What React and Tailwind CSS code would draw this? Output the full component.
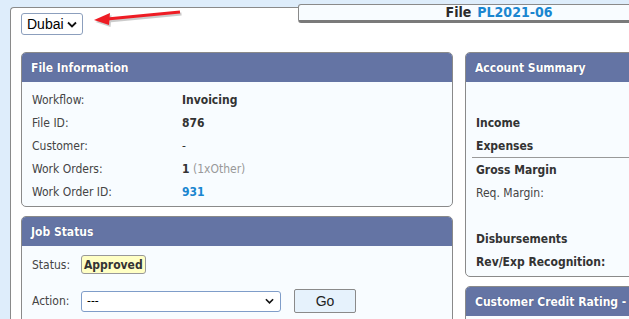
import React from 'react'

const font = "font-['DejaVu_Sans_Condensed','DejaVu_Sans',sans-serif]"

const Chevron = ({ className }) => (
  <svg viewBox="0 0 10 6" className={className} fill="none" stroke="#111" strokeWidth="1.8">
    <path d="M1 1 L5 5 L9 1" />
  </svg>
)

const Panel = ({ title, className = '', children }) => (
  <div className={`border border-[#8a8a8a] rounded-[5px] overflow-hidden bg-[#f8fcff] ${className}`}>
    <div className="h-[29px] bg-[#6474a4] flex items-center pl-[9px] text-white font-bold text-[12px] [text-shadow:0_0_1px_#3a4670]">
      {title}
    </div>
    {children}
  </div>
)

const Row = ({ label, children }) => (
  <div className="flex items-center h-[23px]">
    <div className="w-[150px] text-[#444]">{label}</div>
    <div className="text-[#333]">{children}</div>
  </div>
)

const App = () => {
  return (
    <div className={`w-full h-[319px] overflow-hidden bg-[#deedfb] pt-[7px] pl-[10px] ${font} text-[12px]`}>
      <div className="relative h-[330px] bg-white border-l border-t border-[#8a8a8a] rounded-tl-[4px] pl-[10px] pt-[5px]">

        {/* title tab */}
        <div className="absolute top-[-4px] left-[287px] w-[360px] h-[19px] bg-[#f8fcff] border border-[#8a8a8a] border-b-[3px] border-b-[#7a7a7a] rounded-[3px] flex items-center justify-center pl-[42px] text-[14px] font-bold">
          <span className="text-[#2b2b2b]">File</span>
          <span className="ml-[6px] text-[#1a86d0]">PL2021-06</span>
        </div>

        {/* arrow */}
        <svg className="absolute left-[80px] top-0 w-[100px] h-[24px]" viewBox="0 0 100 24">
          <g transform="translate(1.5,2)" opacity="0.3">
            <path d="M89 4 L16 11" stroke="#555" strokeWidth="3" fill="none" />
            <path d="M3 12 L19 5 L18 17 Z" fill="#555" />
          </g>
          <path d="M89 4 L16 11" stroke="#ee1c24" strokeWidth="3" fill="none" />
          <path d="M3 12 L19 5 L18 17 Z" fill="#ee1c24" />
        </svg>

        <div className="w-[62px] h-[22px] border border-[#8c9fbd] rounded-[3px] bg-white flex items-center justify-between pl-[5px] pr-[5px] font-['Liberation_Sans',sans-serif] text-[14px] text-black">
          <span>Dubai</span>
          <Chevron className="w-[10px] h-[7px]" />
        </div>

        <div className="flex gap-[12px] mt-[17px]">
          <div className="w-[432px] shrink-0 flex flex-col gap-[9px]">
            <Panel title="File Information">
              <div className="pl-[10px] pt-[6px] pb-[3px]">
                <Row label="Workflow:"><span className="font-bold">Invoicing</span></Row>
                <Row label="File ID:"><span className="font-bold">876</span></Row>
                <Row label="Customer:">-</Row>
                <Row label="Work Orders:">
                  <span className="font-bold">1</span> <span className="text-[#999]">(1xOther)</span>
                </Row>
                <Row label="Work Order ID:"><span className="font-bold text-[#1a86d0]">931</span></Row>
              </div>
            </Panel>

            <Panel title="Job Status" className="h-[120px]">
              <div className="pl-[10px] pt-[7px]">
                <div className="flex items-center h-[23px]">
                  <div className="w-[49px] text-[#444]">Status:</div>
                  <div className="h-[19px] px-[2px] flex items-center bg-[#ffffc4] border border-[#999] rounded-[3px] font-bold text-[#333]">Approved</div>
                </div>
                <div className="flex items-center h-[26px] mt-[12px]">
                  <div className="w-[49px] text-[#444]">Action:</div>
                  <div className="w-[200px] h-[21px] border border-[#7f9dc9] rounded-[3px] bg-white flex items-center justify-between pl-[5px] pr-[6px] text-black">
                    <span>---</span>
                    <Chevron className="w-[9px] h-[6px]" />
                  </div>
                  <button className="ml-[13px] w-[62px] h-[24px] border border-[#8a8a8a] rounded-[2px] bg-[#e6f2fc] font-['Liberation_Sans',sans-serif] text-[14px] text-[#222]">
                    Go
                  </button>
                </div>
              </div>
            </Panel>
          </div>

          <div className="w-[300px] shrink-0 flex flex-col gap-[9px]">
            <Panel title="Account Summary">
              <div className="pl-[6px] pt-[6px] pb-[3px] text-[#333]">
                <div className="h-[23px]" />
                <div className="h-[23px] flex items-center pl-[4px] font-bold">Income</div>
                <div className="h-[23px] flex items-center pl-[4px] font-bold">Expenses</div>
                <div className="h-[24px] flex items-center pl-[4px] font-bold border-t border-[#999]">Gross Margin</div>
                <div className="h-[23px] flex items-center pl-[4px] text-[#444]">Req. Margin:</div>
                <div className="h-[23px]" />
                <div className="h-[23px] flex items-center pl-[4px] font-bold">Disbursements</div>
                <div className="h-[23px] flex items-center pl-[4px] font-bold">Rev/Exp Recognition:</div>
              </div>
            </Panel>

            <Panel title="Customer Credit Rating - " className="h-[60px]" />
          </div>
        </div>
      </div>
    </div>
  )
}

export default App
